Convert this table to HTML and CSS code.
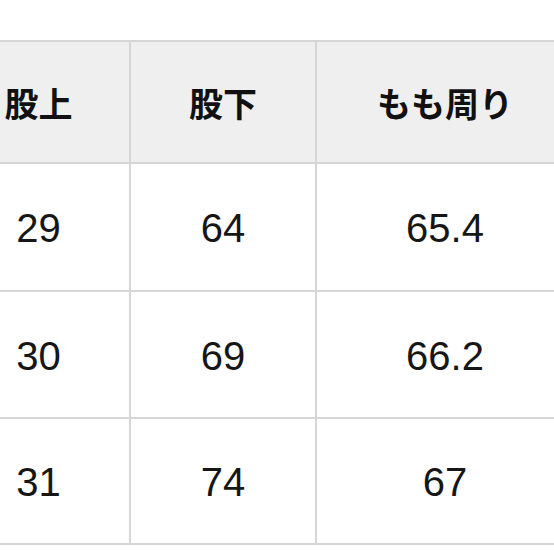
FILE: index.html
```html
<!DOCTYPE html>
<html lang="ja">
<head>
<meta charset="utf-8">
<title>サイズ表</title>
<link rel="stylesheet" href="styles.css">
</head>
<body>
<table class="size-table">
  <colgroup>
    <col class="c1"><col class="c2"><col class="c3">
  </colgroup>
  <thead>
    <tr class="head-row">
      <th>股上</th>
      <th>股下</th>
      <th>もも周り</th>
    </tr>
  </thead>
  <tbody>
    <tr class="r1"><td>29</td><td>64</td><td>65.4</td></tr>
    <tr class="r2"><td>30</td><td>69</td><td>66.2</td></tr>
    <tr class="r3"><td>31</td><td>74</td><td>67</td></tr>
  </tbody>
</table>
</body>
</html>
```
FILE: styles.css
```css
html, body {
  margin: 0;
  padding: 0;
  background: #ffffff;
  overflow: hidden;
}
.size-table {
  margin: 40px 0 0 -54px;
  border-collapse: separate;
  border-spacing: 2px;
  background: #d6d6d6;
  table-layout: fixed;
  width: 629px;
}
.c1 { width: 181px; }
.c2 { width: 184px; }
.c3 { width: 256px; }
.size-table th,
.size-table td {
  padding: 0;
  text-align: center;
  vertical-align: middle;
}
.size-table th {
  background: #efefef;
  height: 120px;
  font-family: "Noto Sans CJK JP", "Liberation Sans", sans-serif;
  font-weight: 700;
  font-size: 34px;
  color: #111111;
}
.size-table td {
  background: #ffffff;
  font-family: "Liberation Sans", Arial, sans-serif;
  font-size: 40px;
  color: #161616;
  padding-top: 3px;
}
.r1 td { height: 123px; }
.r2 td { height: 122px; }
.r3 td { height: 121px; }
```
